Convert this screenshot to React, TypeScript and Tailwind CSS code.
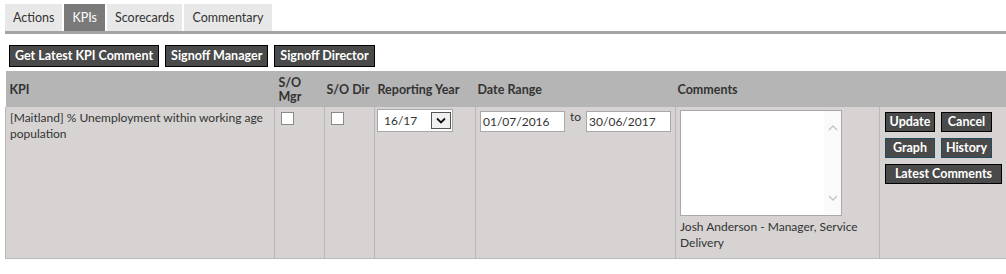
const tabs = ["Actions", "KPIs", "Scorecards", "Commentary"];

function DarkButton({ label, teal = false, className = "" }: { label: string; teal?: boolean; className?: string }) {
  return (
    <button
      className={`h-[20px] bg-[#4a4a4a] text-white font-bold leading-none whitespace-nowrap border ${
        teal ? "border-[#1d4d5e]" : "border-black"
      } ${className}`}
    >
      {label}
    </button>
  );
}

export default function App() {
  return (
    <div className="w-[1006px] h-[274px] bg-white text-[12px] text-[#333] font-['Segoe_UI','Lato',sans-serif] overflow-hidden">
      <div className="pl-[5px] pt-[4px]">
        <div className="flex gap-[2px] border-b-[3px] border-[#a4a4a4]">
          {tabs.map((t) => (
            <div
              key={t}
              className={`h-[27px] px-[8px] pt-[1px] flex items-center text-[12.5px] ${
                t === "KPIs" ? "bg-[#7a7a7a] text-white" : "bg-[#e8e8e8] text-[#333]"
              }`}
            >
              {t}
            </div>
          ))}
        </div>

        <div className="flex gap-[6px] pl-[4px] mt-[11px]">
          <DarkButton label="Get Latest KPI Comment" className="h-[22px] px-[5px] text-[12.5px]" />
          <DarkButton label="Signoff Manager" className="h-[22px] px-[5px] text-[12.5px]" />
          <DarkButton label="Signoff Director" className="h-[22px] px-[5px] text-[12.5px]" />
        </div>

        <table className="mt-[4px] w-[1001px] border-collapse table-fixed">
          <colgroup>
            <col className="w-[269px]" />
            <col className="w-[50px]" />
            <col className="w-[50px]" />
            <col className="w-[101px]" />
            <col className="w-[200px]" />
            <col className="w-[204px]" />
            <col className="w-[127px]" />
          </colgroup>
          <thead>
            <tr className="h-[36px] bg-[#b5b5b5] text-left font-bold text-[12.5px] text-[#333] leading-[14px]">
              <th className="px-[4px] pt-[2px]">KPI</th>
              <th className="px-[4px] pt-[2px]">
                S/O
                <br />
                Mgr
              </th>
              <th className="px-[2px] pt-[2px] whitespace-nowrap">S/O Dir</th>
              <th className="px-[3px] pt-[2px] whitespace-nowrap">Reporting Year</th>
              <th className="px-[2px] pt-[2px]">Date Range</th>
              <th className="px-[2px] pt-[2px]">Comments</th>
              <th></th>
            </tr>
          </thead>
          <tbody>
            <tr className="h-[151px] bg-[#d6d3d2] align-top leading-[16px]">
              <td className="border-l border-b border-r border-[#b8b8b8] px-[4px] pt-[3px]">
                [Maitland] % Unemployment within working age population
              </td>
              <td className="border-b border-r border-[#b8b8b8] pl-[6px] pt-[5px]">
                <div className="w-[13px] h-[13px] bg-white border border-[#8a8a8a]" />
              </td>
              <td className="border-b border-r border-[#b8b8b8] pl-[6px] pt-[5px]">
                <div className="w-[13px] h-[13px] bg-white border border-[#8a8a8a]" />
              </td>
              <td className="border-b border-r border-[#b8b8b8] pl-[2px] pt-[2px]">
                <div className="w-[76px] h-[23px] bg-white border border-[#a9a9a9] flex items-center justify-between pl-[6px] pr-[1px]">
                  <span>16/17</span>
                  <div className="w-[20px] h-[17px] border border-[#555] bg-[#f0f0f0] flex items-center justify-center">
                    <svg width="10" height="7" viewBox="0 0 10 7">
                      <path d="M1 1.5 L5 5.5 L9 1.5" stroke="#111" strokeWidth="1.8" fill="none" />
                    </svg>
                  </div>
                </div>
              </td>
              <td className="border-b border-r border-[#b8b8b8] pl-[4px] pt-[4px]">
                <div className="flex items-start">
                  <div className="w-[85px] h-[21px] bg-white border border-[#a9a9a9] pl-[2px] flex items-center">
                    01/07/2016
                  </div>
                  <span className="px-[5px] -mt-[2px]">to</span>
                  <div className="w-[85px] h-[21px] bg-white border border-[#a9a9a9] pl-[2px] flex items-center">
                    30/06/2017
                  </div>
                </div>
              </td>
              <td className="border-b border-r border-[#b8b8b8] pl-[4px] pt-[3px]">
                <div className="w-[162px] h-[106px] bg-white border border-[#a9a9a9] flex justify-end">
                  <div className="w-[17px] bg-[#fafafa] flex flex-col items-center justify-between py-[14px]">
                    <svg width="10" height="6" viewBox="0 0 10 6">
                      <path d="M1 5 L5 1 L9 5" stroke="#c4c4c4" strokeWidth="1.4" fill="none" />
                    </svg>
                    <svg width="10" height="6" viewBox="0 0 10 6">
                      <path d="M1 1 L5 5 L9 1" stroke="#c4c4c4" strokeWidth="1.4" fill="none" />
                    </svg>
                  </div>
                </div>
                <div className="mt-[3px] pr-[6px]">Josh Anderson - Manager, Service Delivery</div>
              </td>
              <td className="border-b border-[#b8b8b8] pl-[5px] pt-[5px]">
                <div className="flex flex-col gap-[6px]">
                  <div className="flex gap-[6px]">
                    <DarkButton label="Update" className="w-[50px] text-[12.5px]" />
                    <DarkButton label="Cancel" className="w-[51px] text-[12.5px]" />
                  </div>
                  <div className="flex gap-[6px]">
                    <DarkButton label="Graph" teal className="w-[50px] text-[12.5px]" />
                    <DarkButton label="History" teal className="w-[51px] text-[12.5px]" />
                  </div>
                  <DarkButton label="Latest Comments" className="w-[117px] text-[12.5px]" />
                </div>
              </td>
            </tr>
          </tbody>
        </table>
      </div>
    </div>
  );
}
